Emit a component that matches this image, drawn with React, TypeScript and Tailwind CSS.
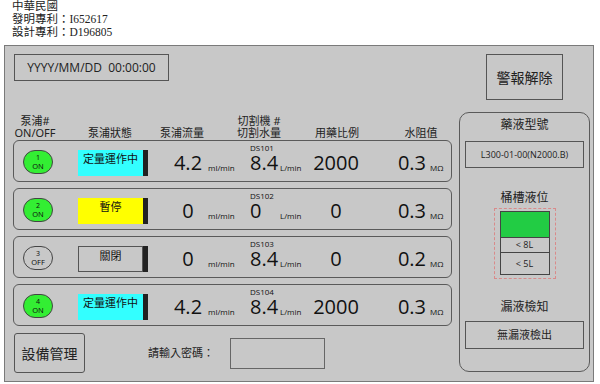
import React from "react";

// Pump row data for the control panel
interface PumpRow {
  id: number;
  on: boolean;
  status: string;
  statusColor: string;
  flow: string;
  ds: string;
  cut: string;
  ratio: string;
  res: string;
}

const rows: PumpRow[] = [
  { id: 1, on: true, status: "定量運作中", statusColor: "bg-[#33ffff]", flow: "4.2", ds: "DS101", cut: "8.4", ratio: "2000", res: "0.3" },
  { id: 2, on: true, status: "暫停", statusColor: "bg-[#ffff00]", flow: "0", ds: "DS102", cut: "0", ratio: "0", res: "0.3" },
  { id: 3, on: false, status: "關閉", statusColor: "bg-[#c8c8c8] border border-[#555]", flow: "0", ds: "DS103", cut: "8.4", ratio: "0", res: "0.2" },
  { id: 4, on: true, status: "定量運作中", statusColor: "bg-[#33ffff]", flow: "4.2", ds: "DS104", cut: "8.4", ratio: "2000", res: "0.3" },
];

const cjk = { fontFamily: '"Noto Sans", "Noto Sans CJK TC", sans-serif' };
const num = { fontFamily: '"Open Sans", "Noto Sans", sans-serif' };

function Row({ r }: { r: PumpRow }) {
  return (
    <div className="flex items-start h-[42px] border border-[#5a5a5a] rounded-[6px]">
      {/* on/off lamp */}
      <div
        className={`ml-[9px] mt-[9px] w-[30px] h-[24px] rounded-full border border-[#444] flex flex-col items-center justify-center leading-[9px] text-[#111] ${
          r.on ? "bg-[#33ee33]" : "bg-[#c8c8c8]"
        }`}
      >
        <span className="text-[7px]">{r.id}</span>
        <span className="text-[7.5px]">{r.on ? "ON" : "OFF"}</span>
      </div>

      {/* status */}
      <div className="ml-[25px] mt-[9px] flex w-[70px] h-[26px]">
        <div className={`flex-1 flex justify-center pt-[1px] text-[11px] leading-[16px] text-[#111] ${r.statusColor}`}>
          {r.status}
        </div>
        <div className="w-[5px] bg-[#222]" />
      </div>

      {/* values: numbers share one bottom line, units sit on the same baseline */}
      <div className="mt-[3px] flex items-end text-[#111]" style={num}>
        <span className="ml-[20px] w-[40px] text-center text-[20px] leading-[18px]">{r.flow}</span>
        <span className="w-[42px] text-[8px] leading-[8px]">ml/min</span>
        <div className="flex flex-col gap-[2px]">
          <span className="text-[8px] leading-[8px]">{r.ds}</span>
          <div className="flex items-end">
            <span className="w-[30px] text-[20px] leading-[18px]">{r.cut}</span>
            <span className="w-[25px] text-[8px] leading-[8px]">L/min</span>
          </div>
        </div>
        <span className="ml-[7px] w-[48px] text-center text-[20px] leading-[18px]">{r.ratio}</span>
        <span className="ml-[25px] w-[41px] text-right text-[20px] leading-[18px]">{r.res}</span>
        <span className="ml-[4px] text-[8px] leading-[8px]">MΩ</span>
      </div>
    </div>
  );
}

export default function App() {
  return (
    <div className="w-[600px] h-[384px] bg-white overflow-hidden text-[#222]" style={cjk}>
      {/* patent notice */}
      <div
        className="pl-[12px] text-[11.5px] leading-[13px] text-[#222]"
        style={{ fontFamily: '"Liberation Serif", "Noto Sans CJK TC", serif' }}
      >
        <div>中華民國</div>
        <div>發明專利：I652617</div>
        <div>設計專利：D196805</div>
      </div>

      <div className="mt-[6px] ml-[4px] w-[590px] h-[337px] border border-[#7a7a7a] bg-[#c8c8c8]">
        {/* top bar */}
        <div className="flex items-start pt-[8px] pl-[9px]">
          <div className="w-[155px] h-[27px] border border-[#555] flex items-center justify-center text-[12px] whitespace-pre" style={num}>
            YYYY/MM/DD  00:00:00
          </div>
          <button className="ml-auto mr-[30px] w-[77px] h-[46px] border border-[#555] text-[14px] text-[#222]">
            警報解除
          </button>
        </div>

        <div className="flex items-start">
          {/* pump table */}
          <div className="ml-[8px] w-[439px]">
            <div className="h-[40px] flex items-end pb-[1px] text-[11px] leading-[12px] text-[#222]">
              <div className="w-[44px] text-center">
                泵浦#
                <br />
                ON/OFF
              </div>
              <div className="ml-[28px] w-[50px] text-center">泵浦狀態</div>
              <div className="ml-[22px] w-[50px] text-center">泵浦流量</div>
              <div className="ml-[27px] w-[50px] text-center">
                切割機 #
                <br />
                切割水量
              </div>
              <div className="ml-[28px] w-[50px] text-center">用藥比例</div>
              <div className="ml-[34px] w-[50px] text-center">水阻值</div>
            </div>

            <div className="flex flex-col gap-[6px]">
              {rows.map((r) => (
                <Row key={r.id} r={r} />
              ))}
            </div>

            {/* bottom controls */}
            <div className="mt-[7px] ml-[1px] flex items-center">
              <button className="w-[71px] h-[40px] border border-[#555] rounded-[3px] text-[14px] text-[#222]">
                設備管理
              </button>
              <span className="ml-[63px] text-[11px]">請輸入密碼：</span>
              <div className="ml-[16px] w-[95px] h-[31px] border border-[#666]" />
            </div>
          </div>

          {/* side panel */}
          <div className="ml-auto mr-[3px] mt-[12px] w-[131px] h-[260px] border border-[#5a5a5a] rounded-[10px] flex flex-col items-center pt-[4px]">
            <div className="text-[12px] leading-[16px]">藥液型號</div>
            <div className="mt-[8px] w-[119px] h-[27px] border border-[#555] flex items-center justify-center text-[9px]" style={num}>
              L300-01-00(N2000.B)
            </div>
            <div className="mt-[22px] text-[12px] leading-[16px]">桶槽液位</div>
            <div className="mt-[2px] w-[62px] h-[71px] border border-dashed border-[#d98a8a] flex justify-center pt-[2px]">
              <div className="w-[50px] h-[64px] border border-[#444] flex flex-col text-[9px]" style={num}>
                <div className="h-[26px] bg-[#22cc44] border-b border-[#444]" />
                <div className="h-[15px] border-b border-[#444] flex items-center justify-center">&lt; 8L</div>
                <div className="flex-1 flex items-center justify-center">&lt; 5L</div>
              </div>
            </div>
            <div className="mt-[20px] text-[12px] leading-[16px]">漏液檢知</div>
            <div className="mt-[6px] w-[119px] h-[28px] border border-[#555] flex items-center justify-center text-[11px]">
              無漏液檢出
            </div>
          </div>
        </div>
      </div>
    </div>
  );
}
